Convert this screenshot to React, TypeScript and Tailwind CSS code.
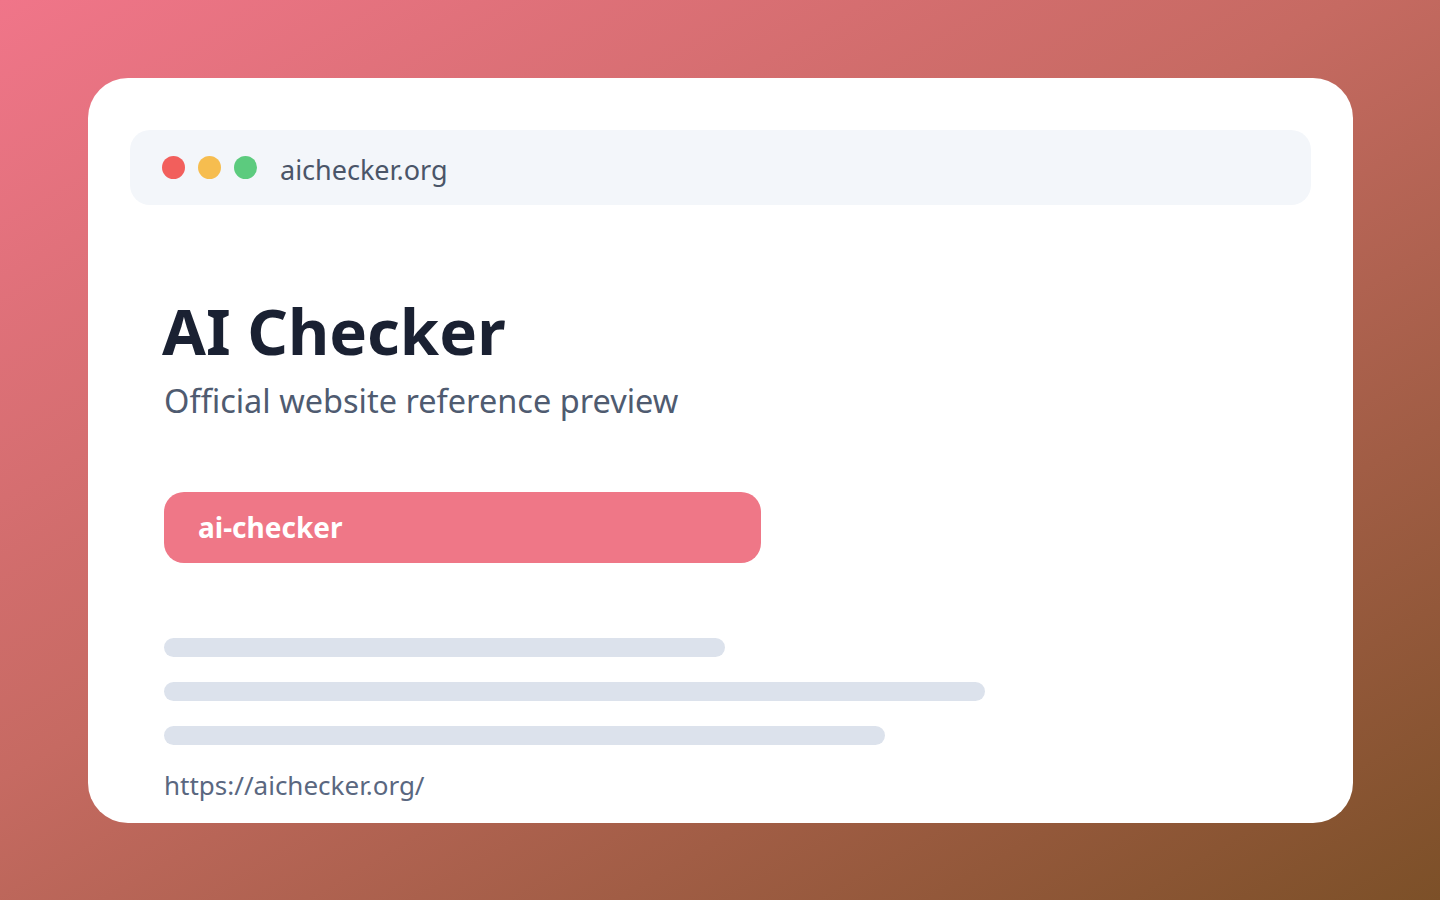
export default function App() {
  const lines = ["w-[561px]", "w-[821px]", "w-[721px]"];
  return (
    <div className="flex h-[900px] w-[1440px] items-start bg-[linear-gradient(150deg,#f07589_0%,#c66a62_45%,#7c5028_100%)] pl-[88px] pt-[78px] font-['Noto_Sans',sans-serif]">
      <div className="flex h-[745px] w-[1265px] flex-col rounded-[40px] bg-white px-[42px] pt-[52px]">
        <div className="flex h-[75px] items-center gap-[13px] rounded-[20px] bg-[#f3f6fa] pl-[32px]">
          <span className="h-[23px] w-[23px] rounded-full bg-[#f25f5c]" />
          <span className="h-[23px] w-[23px] rounded-full bg-[#f6bd4f]" />
          <span className="h-[23px] w-[23px] rounded-full bg-[#5ccb7e]" />
          <span className="ml-[10px] pt-[5px] text-[27px] text-[#4a5568]">aichecker.org</span>
        </div>
        <div className="flex flex-col px-[34px]">
          <h1 className="-ml-[2px] mt-[91px] text-[63.5px] leading-[1.1] font-bold text-[#1a2132]">AI Checker</h1>
          <p className="mt-[15px] text-[32.5px] leading-[1.2] text-[#4f5b70]">Official website reference preview</p>
          <div className="mt-[72px] flex h-[71px] w-[597px] items-center rounded-[20px] bg-[#ef7787] px-[34px]">
            <span className="text-[28px] font-bold text-white">ai-checker</span>
          </div>
          <div className="mt-[75px] flex flex-col gap-[25px]">
            {lines.map((w) => (
              <div key={w} className={`h-[19px] rounded-full bg-[#dce2ec] ${w}`} />
            ))}
          </div>
          <p className="mt-[21px] text-[26px] text-[#5a6780]">https://aichecker.org/</p>
        </div>
      </div>
    </div>
  );
}
